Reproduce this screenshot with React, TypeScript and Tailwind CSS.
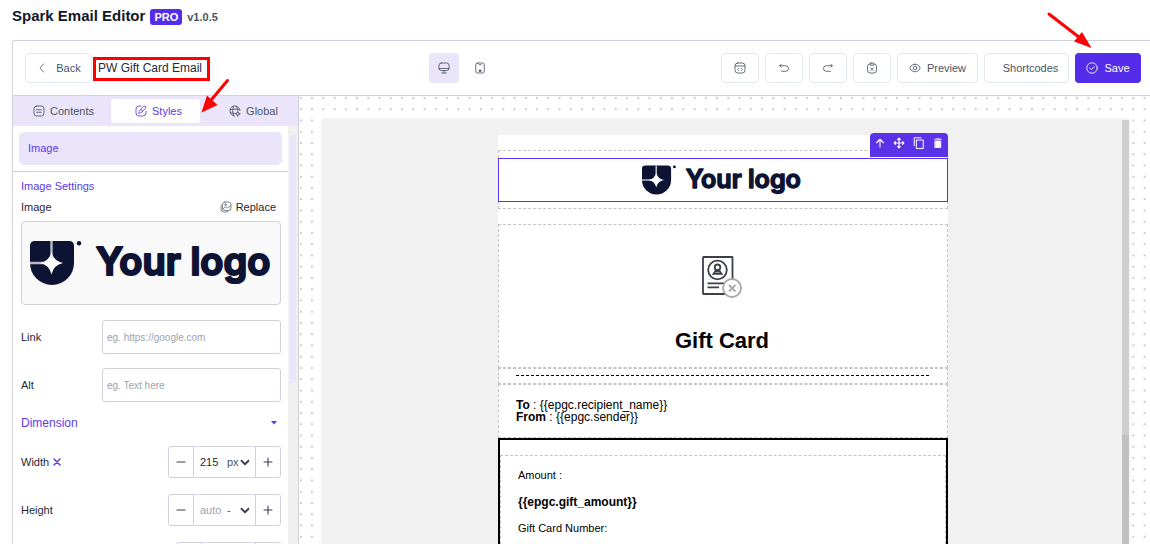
import React, { useState } from "react";
import clsx from "clsx";

type IconProps = {
  className?: string;
  children: React.ReactNode;
};

function Icon({ className = "size-3", children }: IconProps) {
  return (
    <svg
      viewBox="0 0 24 24"
      fill="none"
      stroke="currentColor"
      strokeWidth="1.7"
      strokeLinecap="round"
      strokeLinejoin="round"
      aria-hidden="true"
      className={clsx("shrink-0", className)}
    >
      {children}
    </svg>
  );
}

function Logo({ className }: { className?: string }) {
  return (
    <svg viewBox="0 0 242 44" role="img" aria-label="Your logo" className={clsx("overflow-visible", className)}>
      <path d="M5 0H39Q44 0 44 5V22A22 22 0 0 1 0 22V5Q0 0 5 0Z" fill="#0d1333" />
      <path d="M21.5 0V14M0 22H14" stroke="#b9bbc6" strokeWidth="2.4" />
      <path d="M21.5 11Q23.5 20 33 22Q23.5 24 21.5 33.5Q19.5 24 10 22Q19.5 20 21.5 11Z" fill="#fff" />
      <circle cx="49" cy="2.2" r="2.2" fill="#0d1333" />
      <text
        x="66"
        y="34"
        fontFamily="Inter, 'Liberation Sans', sans-serif"
        fontSize="38"
        fontWeight="600"
        fill="#0d1333"
        stroke="#0d1333"
        strokeWidth="2.2"
        strokeLinejoin="round"
      >
        Your logo
      </text>
    </svg>
  );
}

const toolButton =
  "flex h-[30px] items-center justify-center rounded-[4px] border border-[#e2e8f0] bg-white text-[11px] text-[#4b5563]";

function Toolbar() {
  const [name, setName] = useState("PW Gift Card Email");

  return (
    <header className="flex h-[55px] shrink-0 items-center justify-between border-b border-[#d1d1d6] pr-[9px] pl-3">
      <div className="flex items-center gap-1.5">
        <button className={clsx(toolButton, "w-[67px] gap-2")}>
          <Icon>
            <path d="M15 20 9 13.5Q8 12 9 10.5L15 4" />
          </Icon>
          Back
        </button>
        <input
          aria-label="Template name"
          value={name}
          onChange={(e) => setName(e.target.value)}
          className="h-6 w-[104px] bg-transparent text-xs text-[#1f2937] outline-none"
        />
      </div>

      <div className="flex items-center gap-1.5">
        <button aria-label="Desktop" className="flex size-[30px] items-center justify-center rounded-[4px] bg-[#eae5fb] text-[#4b5563]">
          <Icon>
            <path d="M6.500 2h11Q22 2 22 6.500v6.500Q22 17 17.500 17h-11Q2 17 2 13v-6.500Q2 2 6.500 2ZM12 17v5M2 13h20M7.500 22h9" />
          </Icon>
        </button>
        <button aria-label="Mobile" className="flex size-[30px] items-center justify-center rounded-[4px] text-[#4b5563]">
          <Icon>
            <rect x="3.500" y="2" width="17" height="20" rx="4" />
            <path d="M10 5.500h4" />
            <circle cx="12" cy="17.500" r="1.800" fill="currentColor" />
          </Icon>
        </button>
      </div>

      <div className="flex items-center gap-1.5">
        <button aria-label="Code" className={clsx(toolButton, "w-[38px]")}>
          <Icon>
            <rect x="2" y="2" width="20" height="20" rx="5.500" />
            <path d="M2.500 8h19M9 13l-1.800 2L9 17M15 13l1.800 2-1.800 2" />
          </Icon>
        </button>
        <button aria-label="Undo" className={clsx(toolButton, "w-[38px]")}>
          <Icon>
            <path d="M7 18.500h8.500a5 5 0 0 0 0-11H3.500M6.500 10.500l-3-3 3-3" />
          </Icon>
        </button>
        <button aria-label="Redo" className={clsx(toolButton, "w-[38px]")}>
          <Icon>
            <path d="M17 18.500H8.500a5 5 0 0 1 0-11h12M17.500 10.500l3-3-3-3" />
          </Icon>
        </button>
        <button aria-label="Clear" className={clsx(toolButton, "w-[38px]")}>
          <Icon>
            <path d="M8 4C4.500 4 3 5.500 3 9v7.500Q3 22 8.500 22h7q5.500 0 5.500-5.500V9c0-3.500-1.500-5-5-5" />
            <rect x="8" y="2" width="8" height="4.500" rx="2" />
            <path d="m9.500 12 5 5m0-5-5 5" />
          </Icon>
        </button>
        <button className={clsx(toolButton, "w-[81px] gap-1.5")}>
          <Icon>
            <path d="M12 4.500c4 0 7.500 2.200 9.500 5.500q1.200 2 0 4c-2 3.300-5.500 5.500-9.500 5.500s-7.500-2.200-9.500-5.500q-1.200-2 0-4C4.500 6.700 8 4.500 12 4.500Z" />
            <circle cx="12" cy="12" r="3.600" />
          </Icon>
          Preview
        </button>
        <button className={clsx(toolButton, "w-[85px] pl-2")}>Shortcodes</button>
        <button className="flex h-[30px] w-[66px] items-center justify-center gap-1.5 rounded-[4px] bg-[#532de9] text-[11px] text-white">
          <Icon>
            <circle cx="12" cy="12" r="10.500" />
            <path d="m7.500 12 3.200 3.200 6-6" />
          </Icon>
          Save
        </button>
      </div>
    </header>
  );
}

const tabs = [
  {
    label: "Contents",
    icon: (
      <>
        <rect x="2" y="2" width="20" height="20" rx="5.500" />
        <path d="M7.500 9.500h9M7.500 14.500h9" />
      </>
    ),
  },
  {
    label: "Styles",
    icon: (
      <>
        <path d="M12.500 2H8Q2 2 2 8v8q0 6 6 6h8q6 0 6-6v-4" />
        <path d="M20.500 2.500C22 4 21.500 5.500 20 7.500l-5 5.500-4 3-3.500.500.800-3.700L12 8.500l5-5.500q2-1.500 3.500-.5ZM12 8.500l3 4" />
      </>
    ),
  },
  {
    label: "Global",
    icon: (
      <>
        <path d="M22 11A10 10 0 1 0 11 22M9 2.500Q5 12 9 21.500M15 2.500q2 4 2 8M2.500 9q9.500-2 19 0M2.500 15.500q4 1 8 1" />
        <circle cx="17.500" cy="17.500" r="3" />
        <path d="M17.500 12.500v2M17.500 20.500v2M12.500 17.500h2M20.500 17.500h2" />
      </>
    ),
  },
];

function TextField({ id, label, placeholder }: { id: string; label: string; placeholder: string }) {
  return (
    <div className="flex items-center justify-between">
      <label htmlFor={id}>{label}</label>
      <input
        id={id}
        placeholder={placeholder}
        className="h-[34px] w-[179px] rounded-[3px] border border-[#d1d1db] px-1 text-[10px] outline-none placeholder:text-[#9ca3af]"
      />
    </div>
  );
}

type StepperProps = {
  id: string;
  label: string;
  value?: string;
  unit: string;
  clearable?: boolean;
};

function Stepper({ id, label, value = "", unit, clearable }: StepperProps) {
  return (
    <div className="flex items-center justify-between">
      <div className="flex items-center gap-0.5">
        <label htmlFor={id}>{label}</label>
        {clearable && (
          <button aria-label={`Reset ${label}`} className="text-[#5a3be8]">
            <Icon>
              <path d="m6 6 12 12M18 6 6 18" strokeWidth="3" />
            </Icon>
          </button>
        )}
      </div>
      <div className="flex h-8 w-[113px] rounded-[3px] border border-[#d1d1db]">
        <button aria-label={`Decrease ${label}`} className="flex w-6 items-center justify-center text-[#374151]">
          <Icon>
            <path d="M4 12h16" strokeWidth="2.200" />
          </Icon>
        </button>
        <div className="flex flex-1 items-center border-x border-[#d1d1db] pl-1.5">
          <input
            id={id}
            defaultValue={value}
            placeholder="auto"
            className="w-[27px] text-[11px] text-[#1f2937] outline-none placeholder:text-[#9ca3af]"
          />
          <div className="relative flex items-center">
            <select aria-label={`${label} unit`} className="w-6 appearance-none bg-transparent text-[11px] text-[#4b5563] outline-none">
              <option>{unit}</option>
            </select>
            <Icon className="pointer-events-none absolute right-0 size-3 text-[#374151]">
              <path d="m5 9.500 7 7 7-7" strokeWidth="3.600" />
            </Icon>
          </div>
        </div>
        <button aria-label={`Increase ${label}`} className="flex w-6 items-center justify-center text-[#374151]">
          <Icon>
            <path d="M4 12h16M12 4v16" strokeWidth="2.200" />
          </Icon>
        </button>
      </div>
    </div>
  );
}

function Sidebar() {
  const [active, setActive] = useState("Styles");

  return (
    <aside className="flex w-[286px] shrink-0 flex-col border-r border-[#d1d1d6]">
      <nav className="flex h-[30px] shrink-0 items-center bg-[#eae5fb]">
        {tabs.map(({ label, icon }) => (
          <button
            key={label}
            onClick={() => setActive(label)}
            className={clsx(
              "mx-[3px] flex h-6 flex-1 items-center justify-center gap-[5px] rounded-[3px] pl-1.5 text-[11px]",
              active === label ? "bg-white text-[#5a3be8]" : "text-[#4b5563]"
            )}
          >
            <Icon>{icon}</Icon>
            {label}
          </button>
        ))}
      </nav>

      <div className="flex min-h-0 flex-1">
        <div className="min-w-0 flex-1 overflow-hidden">
          <div className="border-b border-[#d1d1db] p-1.5">
            <div className="flex h-[33px] items-center rounded-[5px] bg-[#eae5fb] pl-[9px] text-[11px] text-[#5a3be8]">Image</div>
          </div>

          <div className="px-[7px] pt-1.5 pl-2 text-[11px] leading-4 text-[#1f2937]">
            <h2 className="text-[#5a3be8]">Image Settings</h2>
            <div className="mt-[5px] flex items-center justify-between">
              <span>Image</span>
              <button className="flex items-center gap-1 pr-[5px]">
                <Icon className="size-3 text-[#6b7280]">
                  <rect x="5" y="2" width="17" height="17" rx="5" />
                  <path d="M5 6Q2 8 2 12v4q0 6 6 6h5q3.500 0 5-2.500M5.500 16l4-3.500q2-1 3.500.500t3.500 0l5-3.500" />
                  <circle cx="11" cy="7.500" r="1.800" />
                </Icon>
                Replace
              </button>
            </div>

            <div className="mt-1.5 flex h-[84px] items-center rounded-[4px] border border-[#d1d1db] bg-[#f9f9f9] px-2">
              <Logo className="w-full" />
            </div>

            <div className="mt-[15px] flex flex-col gap-3.5">
              <TextField id="link" label="Link" placeholder="eg. https://google.com" />
              <TextField id="alt" label="Alt" placeholder="eg. Text here" />
            </div>

            <button className="mt-[13px] flex w-full items-center justify-between pr-1 text-xs leading-4 text-[#5a3be8]">
              Dimension
              <svg viewBox="0 0 6 4" aria-hidden="true" className="h-1 w-1.5">
                <path d="M0 0H6L3 3.500Z" fill="currentColor" />
              </svg>
            </button>

            <div className="mt-[15px] flex flex-col gap-4">
              <Stepper id="width" label="Width" value="215" unit="px" clearable />
              <Stepper id="height" label="Height" unit="-" />
              <div className="ml-auto flex h-8 w-[105px] rounded-[3px] border border-[#d1d1db]">
                <div className="w-6" />
                <div className="flex-1 border-x border-[#d1d1db]" />
                <div className="w-6" />
              </div>
            </div>
          </div>
        </div>

        <div className="w-2.5 bg-[#f0f0f0] px-0.5 pt-[9px]">
          <div className="h-[248px] bg-[#eae5fb]" />
        </div>
      </div>
    </aside>
  );
}

function GiftCardIcon() {
  return (
    <svg viewBox="0 0 40 42" fill="none" stroke="#3b3f4a" strokeWidth="1.800" aria-hidden="true" className="mx-auto h-[42px] w-10">
      <rect x="1" y="1" width="29.500" height="37" rx="0.500" />
      <circle cx="15.500" cy="14" r="9.300" />
      <circle cx="15.500" cy="11.300" r="2.800" />
      <path d="M13.500 13.500V15L11.500 17.800h8L17.500 15V13.500M13.500 15.500h4" />
      <path d="M5.500 27.300H22M5.500 31.300H17" />
      <circle cx="30" cy="32" r="9" fill="#fff" stroke="#aaa7aa" />
      <path d="m27 29 6.500 6.500M33.500 29 27 35.500" stroke="#aaa7aa" />
    </svg>
  );
}

function BlockActions() {
  const button = "flex size-5 items-center justify-center";

  return (
    <div className="absolute -top-[26px] -right-px flex h-6 w-[78px] justify-between rounded-t-[4px] bg-[#5a32e8] text-white">
      <button aria-label="Select parent" className={button}>
        <Icon>
          <path d="M12 20V4.500M5 11.500l7-7 7 7" strokeWidth="2.200" />
        </Icon>
      </button>
      <button aria-label="Move" className={button}>
        <Icon>
          <path d="M12 2.500v19M2.500 12h19M9.500 5 12 2.500 14.500 5M9.500 19l2.500 2.500 2.500-2.500M5 9.500 2.500 12 5 14.500M19 9.500l2.500 2.500-2.500 2.500" strokeWidth="2.400" />
        </Icon>
      </button>
      <button aria-label="Duplicate" className={button}>
        <Icon>
          <path d="M7.500 6h13v17h-13ZM2.500 17V1.500H16" strokeWidth="2" />
        </Icon>
      </button>
      <button aria-label="Delete" className={button}>
        <Icon>
          <path d="M6.500 8h11v13h-11ZM5 4.500h14M10 3.500h4" fill="currentColor" />
        </Icon>
      </button>
    </div>
  );
}

function Email() {
  return (
    <article className="mx-auto w-[450px] bg-white pt-[15px] text-black">
      <div className="border border-dashed border-[#c4c4c4] pt-[7px] pb-1.5">
        <div className="relative -mx-px border border-[#5a32e8] py-1.5 pr-0.5">
          <BlockActions />
          <Logo className="mx-auto h-[30px] w-40" />
        </div>
      </div>

      <div className="mt-[15px] border border-dashed border-[#c4c4c4] pt-[31px] pr-0.5 pb-3">
        <GiftCardIcon />
        <h1 className="mt-[29px] text-center text-[22px] leading-7 font-bold">Gift Card</h1>
      </div>

      <div className="border border-dashed border-[#c4c4c4] px-[17px] py-1.5">
        <svg aria-hidden="true" className="block h-0.5 w-full">
          <path d="M0 .5H413" stroke="#000" strokeDasharray="3 2" />
        </svg>
      </div>

      <div className="border border-dashed border-[#c4c4c4] px-[17px] py-3.5 text-xs leading-3">
        <p>
          <strong>To</strong> : {"{{epgc.recipient_name}}"}
        </p>
        <p>
          <strong>From</strong> : {"{{epgc.sender}}"}
        </p>
      </div>

      <div className="border-2 border-black pt-[15px]">
        <div className="border border-dashed border-[#c4c4c4] px-[17px] pt-[11px] pb-8 text-[11px] leading-4">
          <p>Amount :</p>
          <p className="mt-[11px] text-xs leading-4 font-bold">{"{{epgc.gift_amount}}"}</p>
          <p className="mt-2.5">Gift Card Number:</p>
        </div>
      </div>
    </article>
  );
}

function Canvas() {
  return (
    <main className="relative min-w-0 flex-1 overflow-hidden pt-[23px] pr-[21px] pl-[23px]">
      <svg aria-hidden="true" className="absolute inset-0 size-full">
        <defs>
          <pattern id="dots" width="11.25" height="11.25" patternUnits="userSpaceOnUse">
            <circle cx="1.750" cy="2" r="1" fill="#c0c0c5" />
          </pattern>
        </defs>
        <rect width="100%" height="100%" fill="url(#dots)" />
      </svg>
      <div className="relative flex h-full bg-[#f1f1f1] shadow-[0_0_4px_rgba(0,0,0,0.08)]">
        <div className="min-w-0 flex-1 overflow-hidden pt-4 pl-0.5">
          <Email />
        </div>
        <div className="mt-px w-[7px] bg-[#c1c1c1]">
          <div className="h-[315px] bg-[#cecece]" />
        </div>
      </div>
    </main>
  );
}

export default function App() {
  return (
    <div className="relative flex h-screen flex-col overflow-hidden bg-white pl-3 font-['Liberation_Sans',Arial,sans-serif]">
      <div className="flex h-10 shrink-0 items-start gap-[5px] pt-1.5">
        <h1 className="text-[15px] leading-5 font-bold text-[#111827]">Spark Email Editor</h1>
        <span className="mt-[3px] rounded-[3px] bg-[#532de9] px-1 text-[11px] leading-4 font-bold text-white">PRO</span>
        <span className="mt-[3px] text-[11px] leading-4 font-bold text-[#4b5563]">v1.0.5</span>
      </div>

      <div className="flex min-h-0 flex-1 flex-col rounded-tl-[3px] border-t border-l border-[#d1d1db]">
        <Toolbar />
        <div className="flex min-h-0 flex-1">
          <Sidebar />
          <Canvas />
        </div>
      </div>

      {/* callouts */}
      <div className="pointer-events-none absolute top-[57px] left-[93px] h-6 w-[117px] border-3 border-[#f00]" />
      <svg aria-hidden="true" className="pointer-events-none absolute top-[78px] left-[200px] h-9 w-8">
        <path d="M27.500 2.500 12 21" stroke="#f00" strokeWidth="3" strokeLinecap="round" />
        <path d="M1.500 34.500 7 17.500 17.500 27Z" fill="#f00" />
      </svg>
      <svg aria-hidden="true" className="pointer-events-none absolute top-[10px] right-[56px] h-10 w-12">
        <path d="M3 4 34 28" stroke="#f00" strokeWidth="3" strokeLinecap="round" />
        <path d="M45.500 38 28 31.500 36 22Z" fill="#f00" />
      </svg>
    </div>
  );
}
